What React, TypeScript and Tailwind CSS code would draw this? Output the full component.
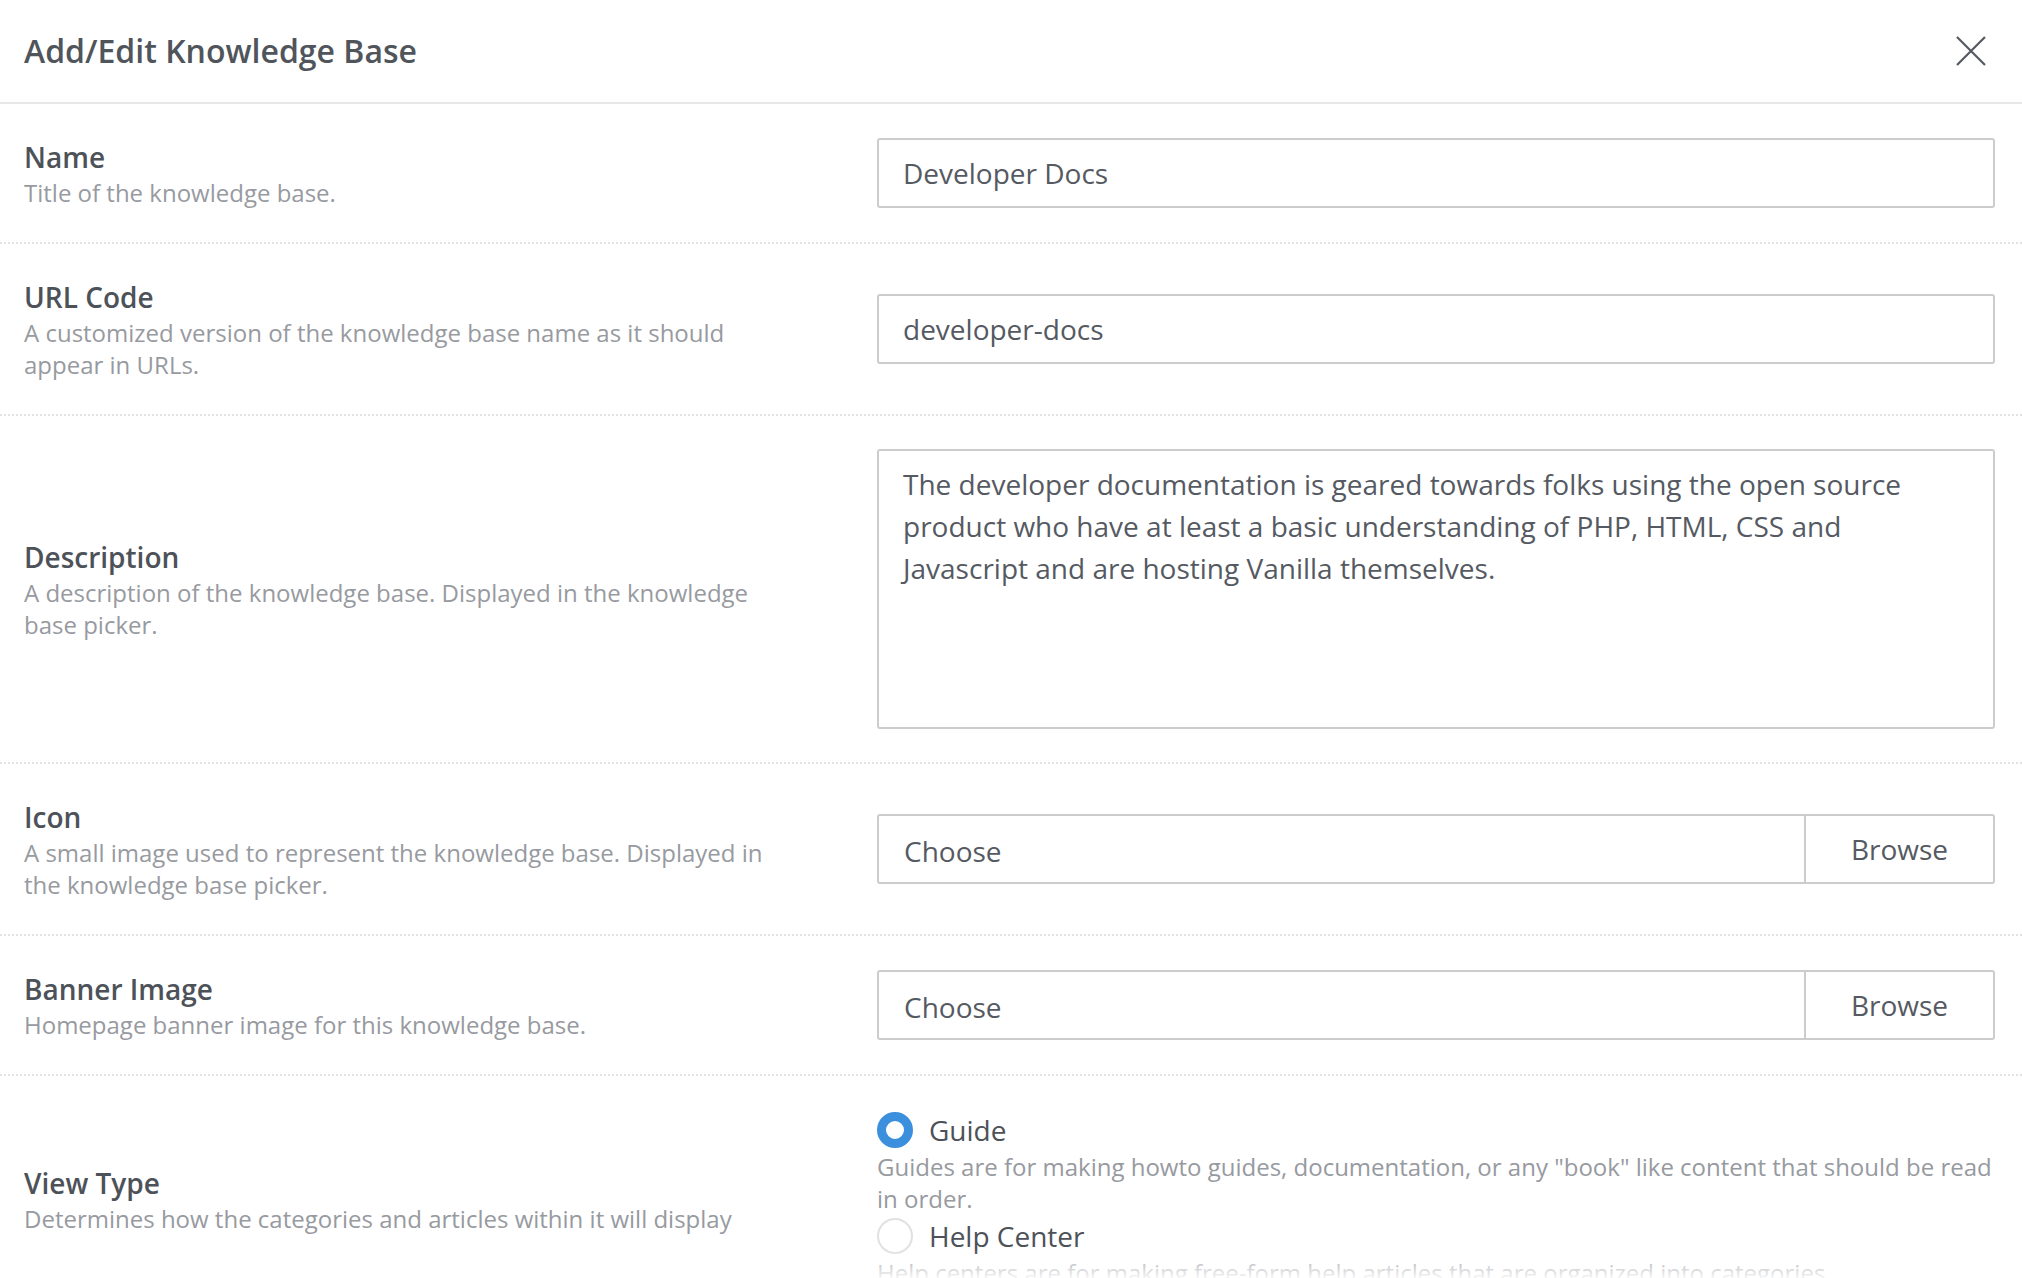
import type { ReactNode } from "react";

const font = { fontFamily: '"Open Sans", "Noto Sans", Arial, sans-serif' };

type RowProps = {
  label: string;
  description: string;
  children: ReactNode;
  last?: boolean;
};

/** ラベル＋説明文（左）と入力欄（右）の 1 行。 */
function FormRow({ label, description, children, last }: RowProps) {
  return (
    <div
      className={
        "grid grid-cols-[760px_1fr] items-center gap-x-[93px] py-[33px] pl-6 pr-[27px] " +
        (last ? "" : "border-b-2 border-dotted border-[#e2e3e5]")
      }
    >
      <div>
        <div className="text-[28px] leading-[40px] font-semibold text-[#4d5259]">{label}</div>
        <div className="text-[24px] leading-[32px] text-[#979aa0]">{description}</div>
      </div>
      <div>{children}</div>
    </div>
  );
}

function TextInput({ value }: { value: string }) {
  return (
    <div className="rounded-[3px] border-2 border-[#cbcccd] bg-white px-6 py-3 text-[28px] leading-[42px] text-[#555a62]">
      {value}
    </div>
  );
}

function FilePicker() {
  return (
    <div className="flex rounded-[3px] border-2 border-[#cbcccd] bg-white text-[28px] leading-[42px] text-[#555a62]">
      <div className="flex-1 px-[25px] pt-[14px] pb-[10px]">Choose</div>
      <div className="flex w-[189px] items-center justify-center border-l-2 border-[#cbcccd]">
        Browse
      </div>
    </div>
  );
}

function Radio({
  checked,
  label,
  description,
}: {
  checked?: boolean;
  label: string;
  description: string;
}) {
  return (
    <div>
      <div className="flex h-[42px] items-center gap-4">
        <span
          className={
            "h-9 w-9 shrink-0 rounded-full bg-white " +
            (checked ? "border-[9px] border-[#3b8fdd]" : "border-2 border-[#e0e1e3]")
          }
        />
        <span className="text-[28px] leading-[42px] text-[#4d5259]">{label}</span>
      </div>
      <div className="text-[24px] leading-[32px] text-[#979aa0]">{description}</div>
    </div>
  );
}

export default function App() {
  return (
    <div className="relative h-[1278px] w-full overflow-hidden bg-white" style={font}>
      <header className="flex h-[104px] items-center justify-between border-b-2 border-[#e6e7e8] pl-6 pr-9">
        <h1 className="text-[32px] font-semibold text-[#50555c]">Add/Edit Knowledge Base</h1>
        <button type="button" aria-label="Close" className="text-[#555a62]">
          <svg width="30" height="30" viewBox="0 0 30 30" fill="none">
            <path d="M1 1L29 29M29 1L1 29" stroke="currentColor" strokeWidth="2.2" />
          </svg>
        </button>
      </header>

      <FormRow label="Name" description="Title of the knowledge base.">
        <TextInput value="Developer Docs" />
      </FormRow>

      <FormRow
        label="URL Code"
        description="A customized version of the knowledge base name as it should appear in URLs."
      >
        <TextInput value="developer-docs" />
      </FormRow>

      <FormRow
        label="Description"
        description="A description of the knowledge base. Displayed in the knowledge base picker."
      >
        <div className="h-[280px] rounded-[3px] border-2 border-[#cbcccd] bg-white px-6 py-3 text-[28px] leading-[42px] text-[#555a62]">
          The developer documentation is geared towards folks using the open source product who
          have at least a basic understanding of PHP, HTML, CSS and Javascript and are hosting
          Vanilla themselves.
        </div>
      </FormRow>

      <FormRow
        label="Icon"
        description="A small image used to represent the knowledge base. Displayed in the knowledge base picker."
      >
        <FilePicker />
      </FormRow>

      <FormRow label="Banner Image" description="Homepage banner image for this knowledge base.">
        <FilePicker />
      </FormRow>

      <FormRow
        label="View Type"
        description="Determines how the categories and articles within it will display"
        last
      >
        <div>
          <Radio
            checked
            label="Guide"
            description={
              'Guides are for making howto guides, documentation, or any "book" like content that should be read in order.'
            }
          />
          <Radio
            label="Help Center"
            description="Help centers are for making free-form help articles that are organized into categories."
          />
        </div>
      </FormRow>

      {/* スクロール領域の下端フェード */}
      <div className="pointer-events-none absolute inset-x-0 bottom-0 h-7 bg-gradient-to-b from-white/0 to-white/90" />
    </div>
  );
}
